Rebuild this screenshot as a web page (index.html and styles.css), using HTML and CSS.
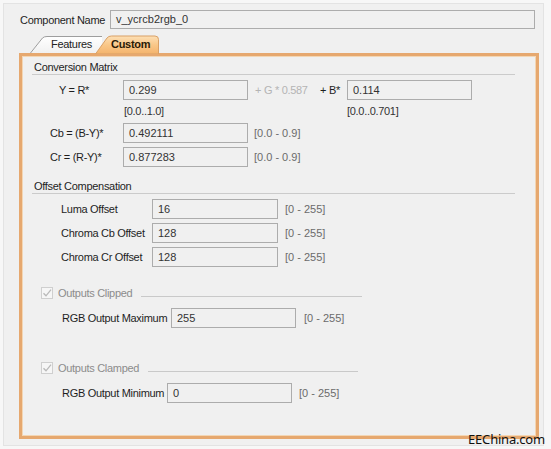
FILE: index.html
```html
<!DOCTYPE html>
<html>
<head>
<meta charset="utf-8">
<link rel="stylesheet" href="styles.css">
</head>
<body>
<div class="window">
  <div class="name-row">
    <span class="name-label">Component Name</span>
    <div class="field name-field">v_ycrcb2rgb_0</div>
  </div>
  <div class="tabs">
    <div class="tab tab-features">
      <svg class="tab-shape" width="72" height="18" viewBox="0 0 72 18">
        <defs>
          <linearGradient id="gf" x1="0" y1="0" x2="0" y2="1">
            <stop offset="0" stop-color="#ffffff"/>
            <stop offset="1" stop-color="#f1f1f1"/>
          </linearGradient>
        </defs>
        <path d="M0.5 18 L12.5 3 Q14 1.5 17 1.5 L72 1.5 L72 18 Z" fill="url(#gf)"/>
        <path d="M0.5 18 L12.5 3 Q14 1.5 17 1.5 L72 1.5" fill="none" stroke="#9e9e9e" stroke-width="1"/>
      </svg>
      <span class="tab-text">Features</span>
    </div>
    <div class="tab tab-custom">
      <svg class="tab-shape" width="65" height="19" viewBox="0 0 65 19">
        <defs>
          <linearGradient id="gc" x1="0" y1="0" x2="0" y2="1">
            <stop offset="0" stop-color="#fde0b6"/>
            <stop offset="0.5" stop-color="#f9c788"/>
            <stop offset="1" stop-color="#f4b36c"/>
          </linearGradient>
        </defs>
        <path d="M0.5 19 L12 3 Q13.5 1 16.5 1 L60 1 Q63.5 1 63.5 4.5 L63.5 19 Z" fill="url(#gc)" stroke="#d9a066" stroke-width="1"/>
      </svg>
      <span class="tab-text">Custom</span>
    </div>
  </div>
  <div class="panel">
    <div class="section-head">Conversion Matrix</div>

    <div class="row row-y">
      <span class="lbl lbl-y">Y = R*</span>
      <div class="field f125">0.299</div>
      <span class="faded">+ G * 0.587</span>
      <span class="lbl lbl-b">+ B*</span>
      <div class="field f125">0.114</div>
    </div>
    <div class="row row-range">
      <span class="range-a">[0.0..1.0]</span>
      <span>[0.0..0.701]</span>
    </div>
    <div class="row row-cb">
      <span class="lbl lbl-c">Cb = (B-Y)*</span>
      <div class="field f125">0.492111</div>
      <span class="hint h6">[0.0 - 0.9]</span>
    </div>
    <div class="row row-cr">
      <span class="lbl lbl-c">Cr = (R-Y)*</span>
      <div class="field f125">0.877283</div>
      <span class="hint h6">[0.0 - 0.9]</span>
    </div>

    <div class="section-head section-offset">Offset Compensation</div>
    <div class="row row-off first">
      <span class="lbl lbl-o">Luma Offset</span>
      <div class="field f126">16</div>
      <span class="hint h7">[0 - 255]</span>
    </div>
    <div class="row row-off">
      <span class="lbl lbl-o">Chroma Cb Offset</span>
      <div class="field f126">128</div>
      <span class="hint h7">[0 - 255]</span>
    </div>
    <div class="row row-off">
      <span class="lbl lbl-o">Chroma Cr Offset</span>
      <div class="field f126">128</div>
      <span class="hint h7">[0 - 255]</span>
    </div>

    <div class="check-row check-clip">
      <span class="checkbox">
        <svg width="12" height="12" viewBox="0 0 12 12"><path d="M2.5 6.2 L5 8.8 L10 2.6" fill="none" stroke="#b9b9b9" stroke-width="1.3"/></svg>
      </span>
      <span class="check-label">Outputs Clipped</span>
      <span class="check-line"></span>
    </div>
    <div class="row row-out">
      <span class="lbl lbl-max">RGB Output Maximum</span>
      <div class="field f125">255</div>
      <span class="hint h8">[0 - 255]</span>
    </div>

    <div class="check-row check-clamp">
      <span class="checkbox">
        <svg width="12" height="12" viewBox="0 0 12 12"><path d="M2.5 6.2 L5 8.8 L10 2.6" fill="none" stroke="#b9b9b9" stroke-width="1.3"/></svg>
      </span>
      <span class="check-label">Outputs Clamped</span>
      <span class="check-line"></span>
    </div>
    <div class="row row-out">
      <span class="lbl lbl-min">RGB Output Minimum</span>
      <div class="field f125">0</div>
      <span class="hint h7">[0 - 255]</span>
    </div>
  </div>
  <div class="watermark">EEChina.com</div>
</div>
</body>
</html>
```
FILE: styles.css
```css
* { box-sizing: border-box; }
html, body { margin: 0; padding: 0; }
body {
  width: 551px;
  height: 449px;
  background: #f7f7f7;
  font-family: "Liberation Sans", Arial, sans-serif;
  font-size: 11px;
  letter-spacing: -0.3px;
  color: #1e1e1e;
  overflow: hidden;
}
.window {
  position: relative;
  margin: 3px 0 0 3px;
  width: 541px;
  height: 443px;
  border: 1px solid #e3e3e3;
  background: #f0f0f0;
}
.name-row {
  display: flex;
  align-items: center;
  margin-top: 6px;
  padding-left: 16px;
  height: 19px;
}
.name-label { width: 90px; white-space: nowrap; }
.field {
  height: 20px;
  border: 1px solid #acacac;
  background: #f0f0f0;
  color: #333;
  padding-left: 5px;
  line-height: 18px;
  letter-spacing: 0;
  white-space: nowrap;
}
.name-field { width: 425px; height: 19px; line-height: 17px; }

.tabs {
  display: flex;
  margin-top: 6px;
  margin-left: 26px;
  height: 18px;
}
.tab {
  position: relative;
  height: 18px;
  line-height: 18px;
}
.tab-shape { position: absolute; left: 0; top: 0; }
.tab-text { position: relative; }
.tab-features { width: 72px; padding-left: 21px; color: #222; }
.tab-custom {
  width: 65px;
  margin-left: -7px;
  padding-left: 16px;
  font-weight: bold;
  color: #2a1a06;
  z-index: 2;
}

.panel {
  margin-left: 15px;
  width: 520px;
  height: 386px;
  border: 3px solid #e6a86f;
  box-shadow: inset 0 0 0 1px #f3d6b4;
  background: #f0f0f0;
}
.section-head {
  margin-top: 5px;
  margin-left: 10px;
  width: 483px;
  height: 14px;
  line-height: 13px;
  padding-left: 2px;
  border-bottom: 1px solid #cbcbcb;
}
.section-offset { margin-top: 13px; }

.row {
  display: flex;
  align-items: center;
  height: 20px;
  white-space: nowrap;
}
.lbl { display: block; }
.row-y { margin-top: 5px; padding-left: 36px; }
.lbl-y { width: 65px; padding-left: 1px; }
.f125 { width: 125px; }
.f126 { width: 126px; }
.faded { width: 65px; margin-left: 7px; color: #b4b4b4; }
.lbl-b { width: 27px; }
.row-range { margin-top: 4px; height: 14px; padding-left: 102px; color: #333; }
.range-a { width: 223px; }
.row-cb { margin-top: 5px; padding-left: 28px; }
.row-cr { margin-top: 4px; padding-left: 28px; }
.lbl-c { width: 73px; }
.hint { color: #6b6b6b; letter-spacing: 0; }
.h6 { margin-left: 6px; }
.h7 { margin-left: 7px; }
.h8 { margin-left: 8px; }

.row-off { margin-top: 4px; padding-left: 39px; }
.row-off.first { margin-top: 5px; }
.lbl-o { width: 91px; }

.check-row {
  display: flex;
  align-items: center;
  height: 14px;
  margin-left: 19px;
  white-space: nowrap;
}
.check-clip { margin-top: 19px; width: 321px; }
.check-clamp { margin-top: 33px; width: 317px; }
.checkbox {
  width: 12px;
  height: 12px;
  border: 1px solid #cfcfcf;
  background: #f6f6f6;
  display: flex;
}
.checkbox svg { margin: -1px; }
.check-label { margin-left: 5px; color: #8c8c8c; }
.check-line {
  flex: 1;
  height: 1px;
  margin-left: 9px;
  margin-top: 6px;
  background: #c9c9c9;
}
.row-out { margin-top: 8px; padding-left: 40px; }
.lbl-max { width: 109px; }
.lbl-min { width: 105px; }

.watermark {
  position: absolute;
  right: -2px;
  bottom: -2px;
  font-family: "Noto Sans", "Liberation Sans", sans-serif;
  font-size: 13px;
  letter-spacing: -0.2px;
  color: #111;
  line-height: 16px;
}
```
